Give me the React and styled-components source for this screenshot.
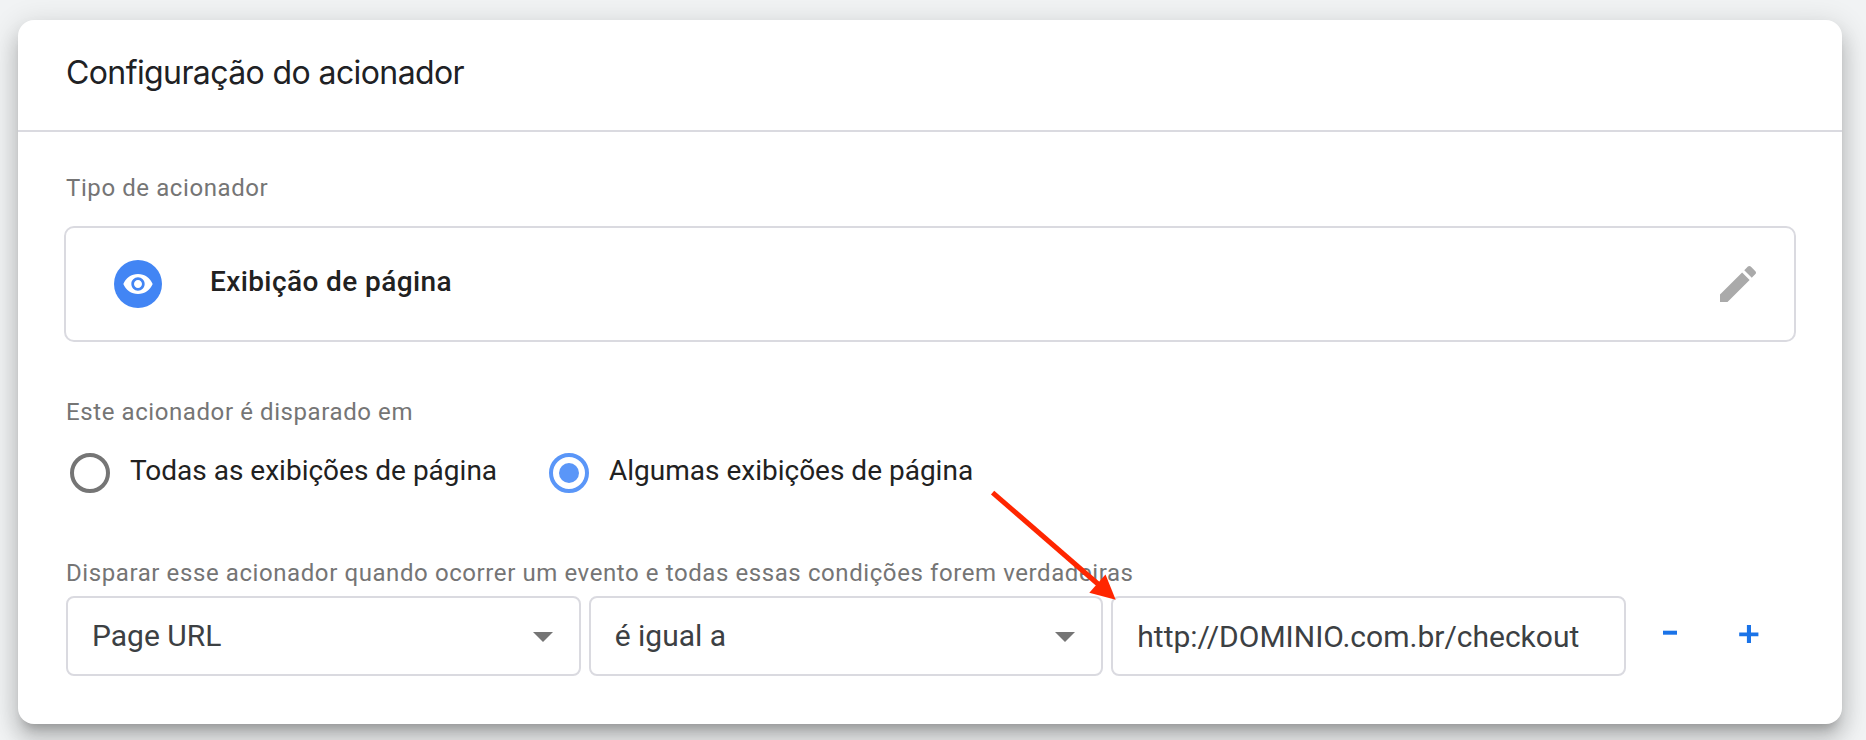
import React from "react";
import styled, { createGlobalStyle } from "styled-components";

const GlobalStyle = createGlobalStyle`
  * { box-sizing: border-box; }
  body {
    margin: 0;
    background: #f1f3f4;
    font-family: Roboto, "Liberation Sans", sans-serif;
    overflow: hidden;
  }
`;

const Page = styled.main`
  height: 740px;
  padding: 20px 24px 16px 18px;
`;

const Card = styled.section`
  position: relative;
  height: 704px;
  background: #fff;
  border-radius: 16px;
  box-shadow: 0 10px 10px -6px rgba(0, 0, 0, 0.2),
    0 16px 20px 2px rgba(0, 0, 0, 0.14), 0 6px 28px 4px rgba(0, 0, 0, 0.12);
`;

const CardHeader = styled.header`
  height: 112px;
  padding: 33px 48px 0;
  border-bottom: 2px solid #dadae0;
`;

const Title = styled.h2`
  margin: 0;
  font: 400 32px/40px Inter, sans-serif;
  letter-spacing: -0.6px;
  color: #202124;
  white-space: nowrap;
`;

const CardBody = styled.div`
  padding: 40px 46px 0;
`;

const Label = styled.div`
  height: 32px;
  margin-left: 2px;
  font-size: 24px;
  line-height: 32px;
  letter-spacing: 0.59px;
  color: #757575;
  white-space: nowrap;
`;

const TypeBox = styled.div`
  display: flex;
  align-items: center;
  height: 116px;
  margin: 22px 0 54px;
  padding: 0 32px 0 48px;
  border: 2px solid #dadae0;
  border-radius: 10px;
`;

const TypeBadge = styled.span`
  display: grid;
  place-items: center;
  width: 48px;
  height: 48px;
  border-radius: 50%;
  background: #4285f4;
`;

const TypeName = styled.span`
  flex: 1;
  margin-left: 48px;
  padding-bottom: 4px;
  font-size: 28px;
  font-weight: 500;
  line-height: 36px;
  letter-spacing: 0.4px;
  color: #212121;
`;

const RadioRow = styled.div`
  display: flex;
  height: 40px;
  margin: 25px 0 64px 6px;
`;

const RadioOption = styled.label`
  display: flex;
  align-items: center;
  width: 479px;
  white-space: nowrap;
`;

const RadioMark = styled.span`
  display: grid;
  place-items: center;
  flex: none;
  width: 40px;
  height: 40px;
  border: 4px solid ${(p) => (p.$checked ? "#5a96f8" : "#757575")};
  border-radius: 50%;

  &::after {
    content: "";
    width: 20px;
    height: 20px;
    border-radius: 50%;
    background: ${(p) => (p.$checked ? "#5a96f8" : "transparent")};
  }
`;

const RadioText = styled.span`
  margin-left: 20px;
  padding-bottom: 4px;
  font-size: 28px;
  line-height: 34px;
  color: #212121;
`;

const ConditionRow = styled.div`
  display: flex;
  gap: 8px;
  margin: 7px 0 0 2px;
`;

const Field = styled.div`
  display: flex;
  align-items: center;
  justify-content: space-between;
  width: 514.67px;
  height: 80px;
  padding: 0 26px 0 24px;
  border: 2px solid #dadae0;
  border-radius: 8px;
  font-size: 30px;
  line-height: 36px;
  color: #3c4043;
  white-space: nowrap;
`;

const FieldText = styled.span`
  padding-top: ${(p) => p.$drop || "0px"};
`;

const Caret = styled.span`
  border: 10px solid transparent;
  border-top-color: #757575;
  border-bottom-width: 0;
  margin-top: 2px;
`;

const Actions = styled.div`
  display: flex;
  align-items: center;
  gap: 40px;
  margin-left: 16px;
`;

const ActionButton = styled.button`
  display: grid;
  place-items: center;
  width: 40px;
  height: 40px;
  padding: 0;
  border: 0;
  background: none;
  color: #1a73e8;
`;

const Pointer = styled.svg`
  position: absolute;
  left: 968px;
  top: 464px;
  pointer-events: none;
`;

export default function App() {
  return (
    <Page>
      <GlobalStyle />
      <Card>
        <CardHeader>
          <Title>Configuração do acionador</Title>
        </CardHeader>
        <CardBody>
          <Label>Tipo de acionador</Label>
          <TypeBox>
            <TypeBadge>
              <svg width="32" height="32" viewBox="0 0 24 24" fill="#fff">
                <path d="M12 4.5C7 4.5 2.73 7.61 1 12c1.73 4.39 6 7.5 11 7.5s9.27-3.11 11-7.5c-1.73-4.39-6-7.5-11-7.5zM12 17c-2.76 0-5-2.24-5-5s2.24-5 5-5 5 2.24 5 5-2.24 5-5 5zm0-8c-1.66 0-3 1.34-3 3s1.34 3 3 3 3-1.34 3-3-1.34-3-3-3z" />
              </svg>
            </TypeBadge>
            <TypeName>Exibição de página</TypeName>
            <svg width="48" height="48" viewBox="0 0 24 24" fill="#aaa">
              <path d="M3 17.25V21h3.75L17.81 9.94l-3.75-3.75L3 17.25zM20.71 7.04c.39-.39.39-1.02 0-1.41l-2.34-2.34c-.39-.39-1.02-.39-1.41 0l-1.83 1.83 3.75 3.75 1.83-1.83z" />
            </svg>
          </TypeBox>
          <Label>Este acionador é disparado em</Label>
          <RadioRow>
            <RadioOption>
              <RadioMark />
              <RadioText>Todas as exibições de página</RadioText>
            </RadioOption>
            <RadioOption>
              <RadioMark $checked />
              <RadioText>Algumas exibições de página</RadioText>
            </RadioOption>
          </RadioRow>
          <Label>
            Disparar esse acionador quando ocorrer um evento e todas essas
            condições forem verdadeiras
          </Label>
          <ConditionRow>
            <Field>
              <FieldText>Page URL</FieldText>
              <Caret />
            </Field>
            <Field>
              <FieldText>é igual a</FieldText>
              <Caret />
            </Field>
            <Field>
              <FieldText $drop="1px">http://DOMINIO.com.br/checkout</FieldText>
            </Field>
            <Actions>
              <ActionButton aria-label="Remover condição">
                <svg width="40" height="40" fill="currentColor">
                  <rect x="13" y="14.7" width="14" height="4" />
                </svg>
              </ActionButton>
              <ActionButton aria-label="Adicionar condição">
                <svg width="40" height="40" fill="currentColor">
                  <path d="M9.2 16.4h7.7V9H21v7.4h7.4v3.8H21V27h-4.1v-6.8H9.2z" />
                </svg>
              </ActionButton>
            </Actions>
          </ConditionRow>
        </CardBody>
        <Pointer width="136" height="122" viewBox="986 484 136 122">
          <path d="M992.6 492.6L1098 584" stroke="#ff2600" strokeWidth="5" />
          <path d="M1115.7 599.7L1089.3 592.7L1105.5 574.5z" fill="#ff2600" />
        </Pointer>
      </Card>
    </Page>
  );
}
